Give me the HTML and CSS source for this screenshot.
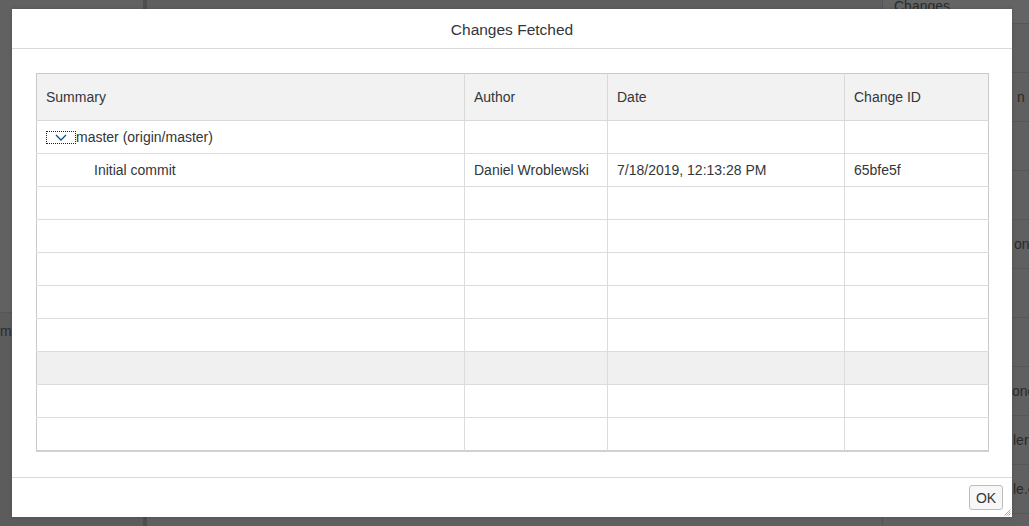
FILE: index.html
```html
<!DOCTYPE html>
<html lang="en">
<head>
<meta charset="utf-8">
<title>Changes Fetched</title>
<link rel="stylesheet" href="styles.css">
</head>
<body>
<div class="page">
  <aside class="side-left">
    <div class="left-row"></div>
    <div class="left-row left-row-text">my</div>
  </aside>
  <main class="main-area"></main>
  <aside class="side-right">
    <div class="right-head">Changes</div>
    <div class="right-row"></div>
    <div class="right-row"><span class="frag frag-n">n</span></div>
    <div class="right-row"></div>
    <div class="right-row"></div>
    <div class="right-row"><span class="frag frag-on">on</span></div>
    <div class="right-row"></div>
    <div class="right-row"></div>
    <div class="right-row"><span class="frag frag-one">one</span></div>
    <div class="right-row"><span class="frag frag-ler">ler</span></div>
    <div class="right-row"><span class="frag frag-lec">le.c</span></div>
  </aside>
</div>

<div class="dialog" role="dialog" aria-label="Changes Fetched">
  <header class="dialog-header">Changes Fetched</header>
  <section class="dialog-content">
    <table class="changes">
      <colgroup>
        <col class="c-summary"><col class="c-author"><col class="c-date"><col class="c-id">
      </colgroup>
      <thead>
        <tr><th>Summary</th><th>Author</th><th>Date</th><th>Change ID</th></tr>
      </thead>
      <tbody>
        <tr>
          <td><div class="tree-cell"><span class="expander"><svg width="12" height="7" viewBox="0 0 12 7"><path d="M1 1 L6 6 L11 1" fill="none" stroke="#0a4f8c" stroke-width="1.3"/></svg></span><span>master (origin/master)</span></div></td>
          <td></td><td></td><td></td>
        </tr>
        <tr>
          <td><span class="child">Initial commit</span></td>
          <td>Daniel Wroblewski</td><td>7/18/2019, 12:13:28 PM</td><td>65bfe5f</td>
        </tr>
        <tr><td></td><td></td><td></td><td></td></tr>
        <tr><td></td><td></td><td></td><td></td></tr>
        <tr><td></td><td></td><td></td><td></td></tr>
        <tr><td></td><td></td><td></td><td></td></tr>
        <tr><td></td><td></td><td></td><td></td></tr>
        <tr class="hover"><td></td><td></td><td></td><td></td></tr>
        <tr><td></td><td></td><td></td><td></td></tr>
        <tr><td></td><td></td><td></td><td></td></tr>
      </tbody>
    </table>
  </section>
  <footer class="dialog-footer">
    <button class="btn" type="button">OK</button>
  </footer>
  <svg class="grip" width="7" height="7" viewBox="0 0 7 7"><path d="M6.5 0.5 L0.5 6.5 M6.5 2.5 L2.5 6.5 M6.5 4.5 L4.5 6.5" stroke="#9a9a9a" stroke-width="0.8"/></svg>
</div>
</body>
</html>
```

FILE: styles.css
```css
* { box-sizing: border-box; }
html, body {
  margin: 0;
  width: 1029px;
  height: 526px;
  overflow: hidden;
  background: #5f5f5f;
  font-family: "Liberation Sans", Arial, sans-serif;
}
.page {
  display: flex;
  height: 526px;
}
.side-left {
  width: 147px;
  background: #5c5c5c;
  border-right: 4px solid #4e4e4e;
  display: flex;
  flex-direction: column;
}
.left-row {
  height: 313px;
  border-bottom: 1px solid #575757;
  background: #616161;
}
.left-row-text {
  height: 40px;
  background: #5c5c5c;
  border-bottom: none;
  color: #2a2a2a;
  font-size: 14px;
  padding-top: 10px;
  padding-left: 0;
}
.main-area {
  flex: 1;
  background: #5f5f5f;
}
.side-right {
  width: 147px;
  border-left: 1px solid #555;
  background: #606060;
  color: #2a2a2a;
  font-size: 14px;
  overflow: hidden;
  white-space: nowrap;
}
.right-head {
  height: 24px;
  border-bottom: 1px solid #575757;
  padding-left: 11px;
  line-height: 12px;
  background: #646464;
}
.right-row {
  height: 49px;
  border-bottom: 1px solid #575757;
  display: flex;
  align-items: center;
}
.frag { display: block; }
.frag-n { padding-left: 134px; }
.frag-on { padding-left: 131px; }
.frag-one { padding-left: 129px; }
.frag-ler { padding-left: 130px; }
.frag-lec { padding-left: 130px; }

.dialog {
  position: absolute;
  left: 12px;
  top: 9px;
  width: 1000px;
  height: 508px;
  background: #fff;
  display: flex;
  flex-direction: column;
  color: #32363a;
  box-shadow: 0 0 4px rgba(0,0,0,0.15);
}
.dialog-header {
  height: 40px;
  border-bottom: 1px solid #d9d9d9;
  display: flex;
  align-items: center;
  justify-content: center;
  font-size: 15.5px;
  padding-top: 2px;
}
.dialog-content {
  flex: 1;
  padding: 24px 24px 0 24px;
}
.changes {
  width: 952px;
  table-layout: fixed;
  border-collapse: collapse;
  border: 1px solid #c9c9c9;
  border-bottom: 2px solid #d0d0d0;
  font-size: 14px;
}
.c-summary { width: 428px; }
.c-author { width: 143px; }
.c-date { width: 237px; }
.c-id { width: 144px; }
.changes th {
  height: 47px;
  background: #f2f2f2;
  font-weight: normal;
  text-align: left;
  padding: 0 9px;
  border: 1px solid #d9d9d9;
  border-top: none;
  color: #32363a;
}
.changes td {
  height: 33px;
  padding: 0 9px;
  border: 1px solid #dcdcdc;
  border-top: none;
  white-space: nowrap;
}
.changes th:first-child, .changes td:first-child { border-left: none; padding-left: 9px; }
.changes th:last-child, .changes td:last-child { border-right: none; }
.changes tr.hover td { background: #f0f0f0; }
.tree-cell {
  display: flex;
  align-items: center;
}
.expander {
  width: 30px;
  height: 13px;
  border: 1px dotted #222;
  display: flex;
  align-items: center;
  justify-content: center;
}
.child { padding-left: 48px; }
.dialog-footer {
  height: 40px;
  border-top: 1px solid #d9d9d9;
  display: flex;
  justify-content: flex-end;
  align-items: flex-start;
  padding: 7px 9px 0 0;
}
.btn {
  width: 34px;
  height: 25px;
  border: 1px solid #bcbcbc;
  border-radius: 3px;
  background: #f7f7f7;
  color: #32363a;
  font-family: "Liberation Sans", Arial, sans-serif;
  font-size: 14px;
  padding: 0;
}
.grip {
  position: absolute;
  right: 1px;
  bottom: 1px;
}
```
